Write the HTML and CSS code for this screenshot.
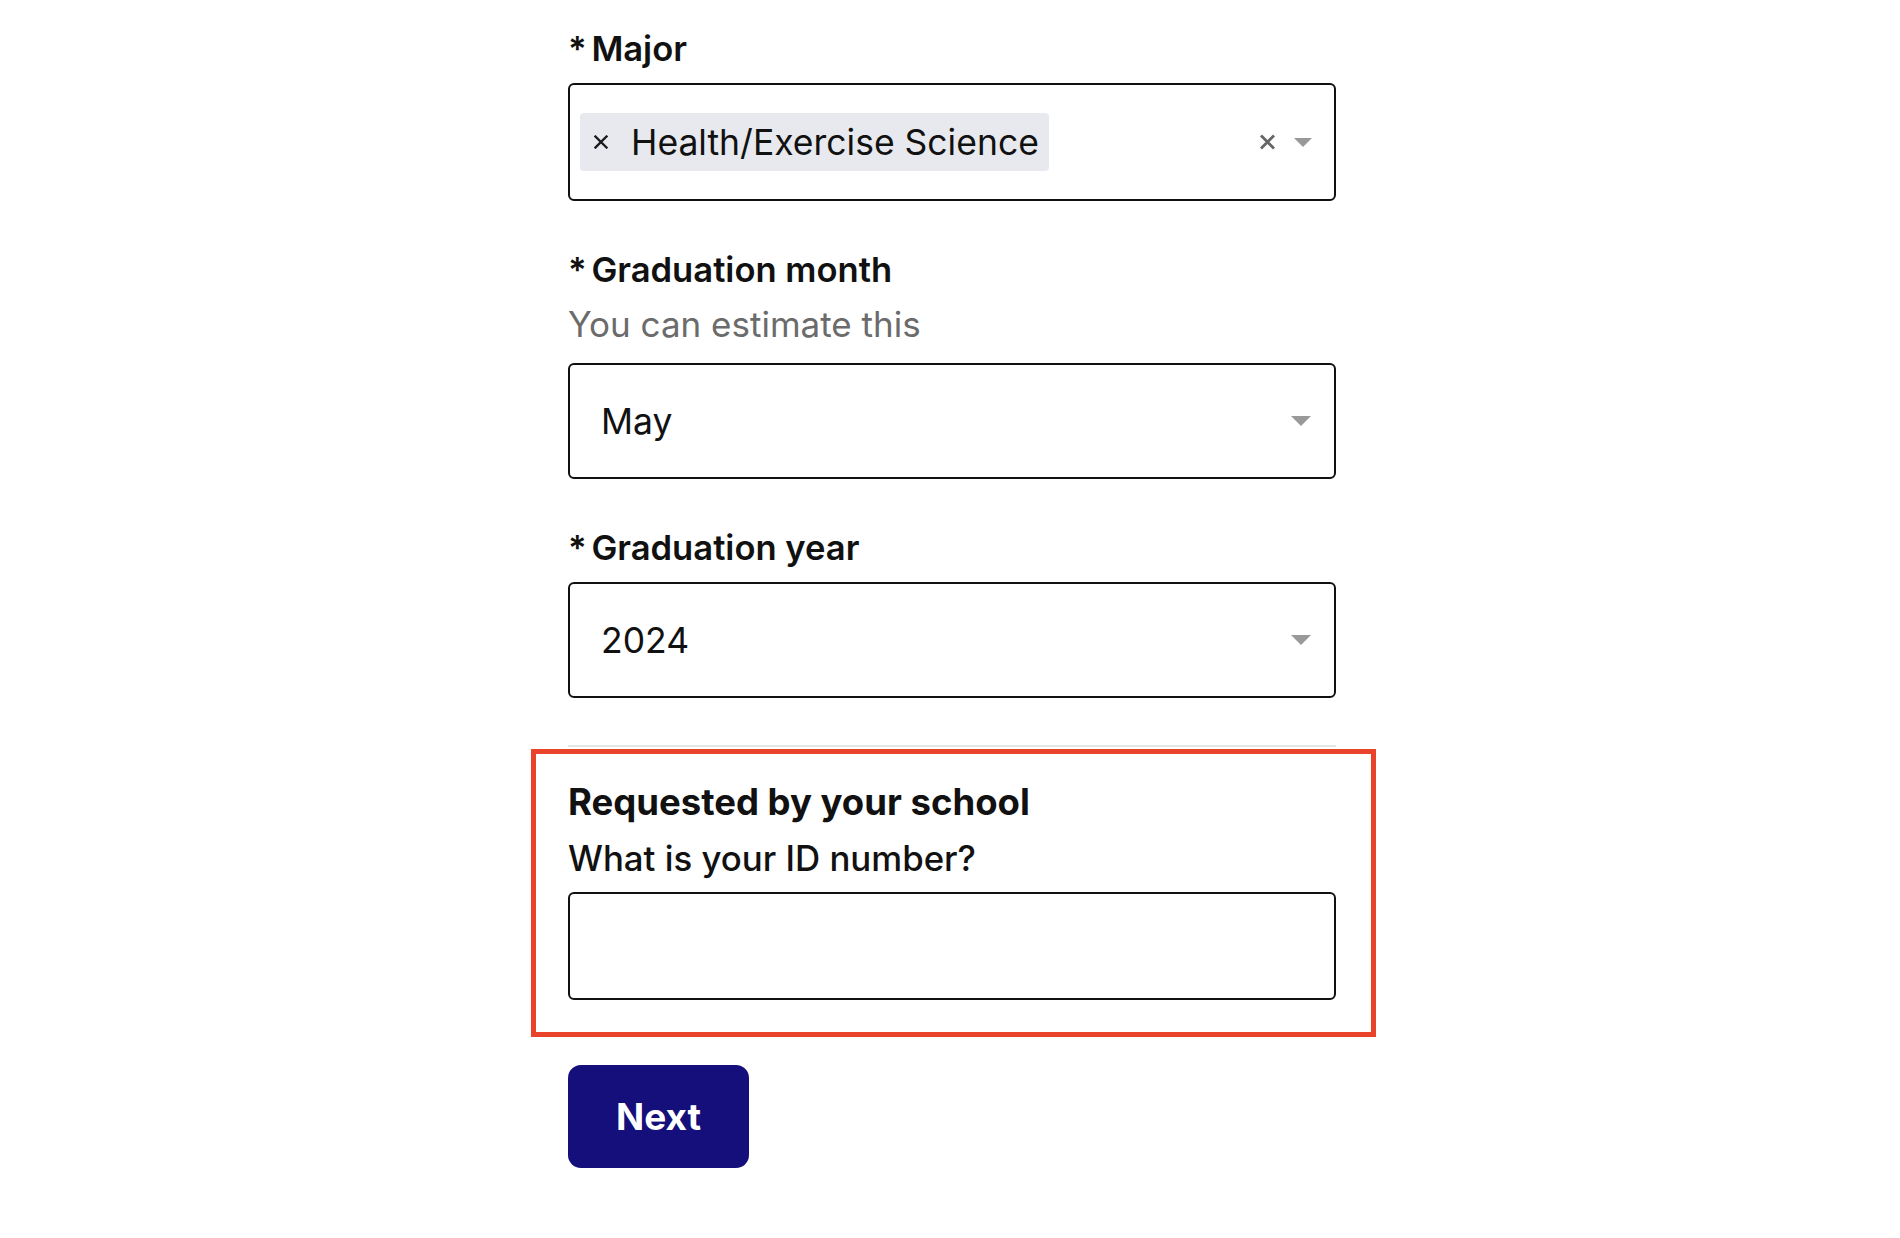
FILE: index.html
```html
<!DOCTYPE html>
<html lang="en">
<head>
<meta charset="utf-8">
<title>School details</title>
<link rel="stylesheet" href="styles.css">
</head>
<body>
<main class="form">
  <div class="field">
    <label class="label"><span class="req">* </span>Major</label>
    <div class="control control-multi">
      <span class="tag">
        <svg class="tag-x" width="14" height="14" viewBox="0 0 14 14"><path d="M1.5 1.5 L12.5 12.5 M12.5 1.5 L1.5 12.5" stroke="#1a1a1a" stroke-width="2.3" stroke-linecap="square"/></svg>
        <span class="tag-text">Health/Exercise Science</span>
      </span>
      <span class="indicators">
        <svg class="clear" width="17" height="16" viewBox="0 0 17 16"><path d="M2 1.5 L15 14.5 M15 1.5 L2 14.5" stroke="#666" stroke-width="2.8"/></svg>
        <svg class="caret" width="18" height="9" viewBox="0 0 18 9"><polygon points="0,0 18,0 9,9" fill="#999"/></svg>
      </span>
    </div>
  </div>

  <div class="field">
    <label class="label"><span class="req">* </span>Graduation month</label>
    <div class="helper">You can estimate this</div>
    <div class="control">
      <span class="value">May</span>
      <svg class="caret" width="20" height="10" viewBox="0 0 20 10"><polygon points="0,0 20,0 10,10" fill="#999"/></svg>
    </div>
  </div>

  <div class="field">
    <label class="label"><span class="req">* </span>Graduation year</label>
    <div class="control">
      <span class="value">2024</span>
      <svg class="caret" width="20" height="10" viewBox="0 0 20 10"><polygon points="0,0 20,0 10,10" fill="#999"/></svg>
    </div>
  </div>

  <section class="school">
    <h2 class="school-title">Requested by your school</h2>
    <label class="question" for="sid">What is your ID number?</label>
    <input class="text-input" id="sid" type="text">
  </section>

  <button class="next" type="button">Next</button>
</main>
</body>
</html>
```
FILE: styles.css
```css
html, body {
  margin: 0;
  padding: 0;
  background: #ffffff;
}

body {
  font-family: Inter, "Noto Sans", "Liberation Sans", sans-serif;
  color: #111111;
}

.form {
  width: 768px;
  margin-left: 568px;
  padding-top: 28px;
  padding-bottom: 60px;
}

.field + .field {
  margin-top: 48px;
}

.label {
  display: block;
  font-size: 34.6px;
  font-weight: 600;
  line-height: 40px;
  margin-bottom: 15px;
}

.req {
  letter-spacing: -2px;
}

.helper {
  font-size: 35px;
  line-height: 40px;
  color: #6b6b6b;
  margin-bottom: 19px;
}

.control {
  box-sizing: border-box;
  height: 116px;
  border: 2px solid #111111;
  border-radius: 6px;
  display: flex;
  align-items: center;
  padding: 0 23px 0 31px;
  font-size: 35.5px;
  color: #111111;
}

.control-multi {
  height: 118px;
  padding-left: 10px;
  padding-right: 22px;
}

.value {
  flex: 1;
}

.tag {
  display: flex;
  align-items: center;
  gap: 23px;
  height: 58px;
  padding: 0 10px 0 14px;
  background: #e8e9ee;
  border-radius: 4px;
}

.tag-x {
  flex: none;
}

.indicators {
  margin-left: auto;
  display: flex;
  align-items: center;
  gap: 18px;
}

.caret {
  flex: none;
}

.school {
  position: relative;
  margin-top: 47px;
  border-top: 2px solid #e4e4e4;
  padding: 35px 0 37px;
}

.school::after {
  content: "";
  position: absolute;
  left: -37px;
  right: -40px;
  top: 2px;
  bottom: 0;
  border: 5px solid #e9432b;
  pointer-events: none;
}

.school-title {
  margin: 0;
  font-size: 36.5px;
  font-weight: 700;
  line-height: 40px;
}

.question {
  display: block;
  margin: 16px 0 14px;
  font-size: 34.8px;
  font-weight: 500;
  line-height: 40px;
}

.text-input {
  display: block;
  box-sizing: border-box;
  width: 100%;
  height: 108px;
  border: 2px solid #111111;
  border-radius: 6px;
  padding: 0 31px;
  font-family: inherit;
  font-size: 35px;
  background: #ffffff;
  outline: none;
}

.next {
  display: block;
  margin-top: 28px;
  width: 181px;
  height: 103px;
  border: none;
  border-radius: 13px;
  background: #140f7a;
  color: #ffffff;
  font-family: inherit;
  font-size: 37px;
  font-weight: 700;
  cursor: pointer;
}
```
